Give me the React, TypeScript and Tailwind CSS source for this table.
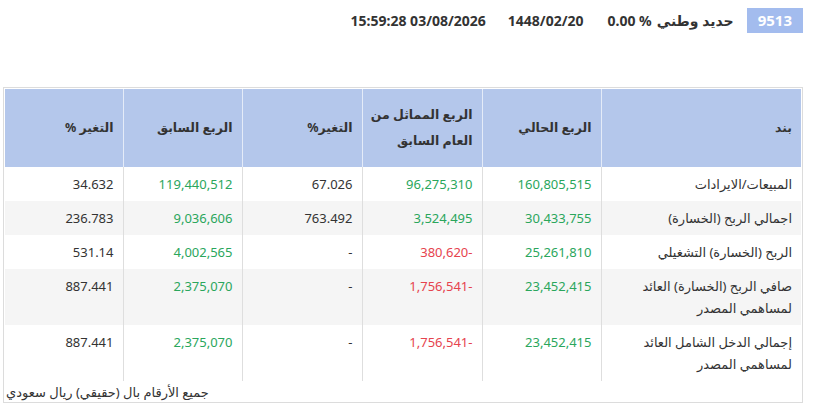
const rows = [
  {
    label: ["المبيعات/الايرادات"],
    cur: "160,805,515",
    same: "96,275,310",
    sameNeg: false,
    chg1: "67.026",
    prev: "119,440,512",
    chg2: "34.632",
  },
  {
    label: ["اجمالي الربح (الخسارة)"],
    cur: "30,433,755",
    same: "3,524,495",
    sameNeg: false,
    chg1: "763.492",
    prev: "9,036,606",
    chg2: "236.783",
  },
  {
    label: ["الربح (الخسارة) التشغيلي"],
    cur: "25,261,810",
    same: "380,620-",
    sameNeg: true,
    chg1: "-",
    prev: "4,002,565",
    chg2: "531.14",
  },
  {
    label: ["صافي الربح (الخسارة) العائد", "لمساهمي المصدر"],
    cur: "23,452,415",
    same: "1,756,541-",
    sameNeg: true,
    chg1: "-",
    prev: "2,375,070",
    chg2: "887.441",
  },
  {
    label: ["إجمالي الدخل الشامل العائد", "لمساهمي المصدر"],
    cur: "23,452,415",
    same: "1,756,541-",
    sameNeg: true,
    chg1: "-",
    prev: "2,375,070",
    chg2: "887.441",
  },
];

const App = () => {
  return (
    <div
      className="w-[813px] h-[409px] bg-white text-[#333] pl-[3px] pr-[10px]"
      style={{ fontFamily: '"Noto Sans", "DejaVu Sans", sans-serif' }}
    >
      {/* top bar */}
      <div dir="rtl" className="flex items-center h-[41px] text-[14px] font-bold">
        <span className="h-[25px] px-[11px] flex items-center bg-[#a3bcee] text-white text-[15px]">
          9513
        </span>
        <span className="mr-[13px]">حديد وطني</span>
        <bdi dir="ltr" className="mr-[5px]">0.00 %</bdi>
        <span className="mr-[24px]">1448/02/20</span>
        <bdi dir="ltr" className="mr-[22px]">15:59:28 03/08/2026</bdi>
      </div>

      <div className="mt-[46px] border border-[#dcdcdc] h-[316px] p-[1px]">
        <table dir="rtl" className="w-full border-collapse text-[13px] table-fixed">
          <colgroup>
            <col className="w-[200px]" />
            <col className="w-[119px]" />
            <col className="w-[120px]" />
            <col className="w-[120px]" />
            <col className="w-[119px]" />
            <col />
          </colgroup>
          <thead>
            <tr className="bg-[#b4c7eb] h-[78px] text-[12.5px] leading-[26px] whitespace-nowrap">
              <th className="text-right align-middle px-[9px] border-l border-[#e4ebf8] font-bold">بند</th>
              <th className="text-right align-middle px-[9px] border-l border-[#e4ebf8] font-bold">الربع الحالي</th>
              <th className="text-right align-middle px-[9px] border-l border-[#e4ebf8] font-bold">
                الربع المماثل من
                <br />
                العام السابق
              </th>
              <th className="text-right align-middle px-[9px] border-l border-[#e4ebf8] font-bold">التغير%</th>
              <th className="text-right align-middle px-[9px] border-l border-[#e4ebf8] font-bold">الربع السابق</th>
              <th className="text-right align-middle px-[9px] font-bold">التغير %</th>
            </tr>
          </thead>
          <tbody className="leading-[22px]">
            {rows.map((r, i) => (
              <tr key={i} className={i % 2 === 1 ? "bg-[#f5f5f5]" : "bg-white"}>
                <td className="text-right align-top px-[9px] py-[6px] border-l border-[#dedede]">
                  {r.label.map((l, j) => (
                    <div key={j}>{l}</div>
                  ))}
                </td>
                <td className="text-right align-top px-[9px] py-[6px] border-l border-[#dedede] text-[#2aa65c]">
                  {r.cur}
                </td>
                <td
                  className={
                    "text-right align-top px-[9px] py-[6px] border-l border-[#dedede] " +
                    (r.sameNeg ? "text-[#e6434e]" : "text-[#2aa65c]")
                  }
                >
                  <bdi dir="ltr">{r.same}</bdi>
                </td>
                <td className="text-right align-top px-[9px] py-[6px] border-l border-[#dedede]">
                  {r.chg1}
                </td>
                <td className="text-right align-top px-[9px] py-[6px] border-l border-[#dedede] text-[#2aa65c]">
                  {r.prev}
                </td>
                <td className="text-right align-top px-[9px] py-[6px]">{r.chg2}</td>
              </tr>
            ))}
          </tbody>
        </table>
        <div dir="rtl" className="text-left text-[13px] leading-[20px] pt-[1px] pl-[1px]">
          جميع الأرقام بال (حقيقي) ريال سعودي
        </div>
      </div>
    </div>
  );
};

export default App;
